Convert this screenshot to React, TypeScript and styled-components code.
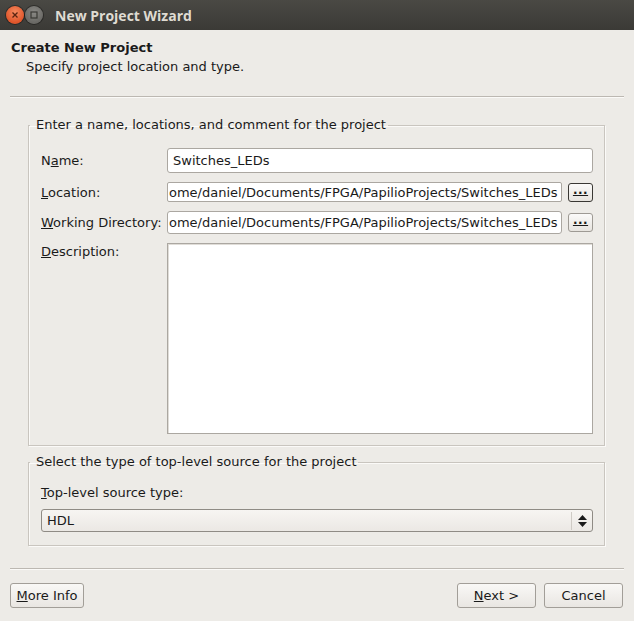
import React from "react"
import styled, { createGlobalStyle } from "styled-components"

const GlobalStyle = createGlobalStyle`
  html, body {
    margin: 0;
    padding: 0;
    background: #edebe7;
  }
  body {
    font-family: "DejaVu Sans", "Noto Sans", sans-serif;
    font-size: 13px;
    color: #1a1a1a;
  }
`

const Window = styled.div`
  width: 634px;
  height: 621px;
  display: flex;
  flex-direction: column;
  background: #edebe7;
  overflow: hidden;
`

const TitleBar = styled.div`
  height: 30px;
  flex: none;
  display: flex;
  align-items: center;
  padding-left: 6px;
  gap: 1px;
  background: linear-gradient(#4a4944, #3b3a36);
`

const WinButton = styled.div<{ $kind: "close" | "min" }>`
  width: 18px;
  height: 18px;
  border-radius: 50%;
  display: flex;
  align-items: center;
  justify-content: center;
  background: ${(p) =>
    p.$kind === "close"
      ? "radial-gradient(circle at 50% 35%, #f58a5f, #e0552a 70%)"
      : "radial-gradient(circle at 50% 35%, #8a8985, #6a6965 70%)"};
  box-shadow: 0 0 0 1px rgba(0, 0, 0, 0.35);
`

const WinTitle = styled.div`
  margin-left: 11px;
  color: #dfdbd2;
  font-family: "Open Sans", "DejaVu Sans", sans-serif;
  font-weight: 700;
  font-size: 14px;
`

const Header = styled.div`
  padding: 10px 11px 0;
  height: 56px;
  flex: none;
`

const HeaderTitle = styled.div`
  font-weight: 700;
  line-height: 16px;
`

const HeaderSub = styled.div`
  padding-left: 15px;
  margin-top: 3px;
  line-height: 16px;
`

const Separator = styled.div`
  height: 1px;
  background: #bcb8b2;
  border-bottom: 1px solid #fbfaf8;
  margin: 0 10px;
  flex: none;
`

const Body = styled.div`
  padding: 20px 29px 0 28px;
  display: flex;
  flex-direction: column;
  gap: 9px;
  flex: none;
`

const Group = styled.fieldset<{ $height: number }>`
  margin: 0;
  padding: 0 11px 0 12px;
  height: ${(p) => p.$height}px;
  box-sizing: border-box;
  border: 1px solid #c9c5bf;
  box-shadow: 1px 1px 0 #fbfaf8, inset 1px 1px 0 #fbfaf8;
  min-width: 0;
`

const Legend = styled.legend`
  padding: 0 2px 0 6px;
  margin-left: -11px;
  line-height: 14px;
`

const FormGrid = styled.div`
  display: grid;
  grid-template-columns: 126px 1fr;
  grid-template-rows: 25px 20px 23px 191px;
  row-gap: 9px;
  margin-top: 16px;
`

const Label = styled.div<{ $top?: boolean }>`
  display: flex;
  align-items: ${(p) => (p.$top ? "flex-start" : "center")};
  padding-top: ${(p) => (p.$top ? "1px" : "0")};
  white-space: nowrap;
`

const FieldRow = styled.div`
  display: flex;
  align-items: center;
  gap: 6px;
  min-width: 0;
`

const Field = styled.div<{ $height: number; $radius?: number }>`
  flex: 1;
  min-width: 0;
  height: ${(p) => p.$height}px;
  box-sizing: border-box;
  background: #fff;
  border: 1px solid #aba7a1;
  border-radius: ${(p) => p.$radius ?? 3}px;
  padding: 0 5px;
  display: flex;
  align-items: center;
  white-space: nowrap;
  overflow: hidden;
  color: #1a1a1a;
`

const ScrolledText = styled.span`
  margin-left: -4px;
`

const TextArea = styled.div`
  background: #fff;
  border: 1px solid #aba7a1;
  box-shadow: inset 1px 1px 0 #e0ddd8;
`

const BrowseButton = styled.div<{ $focus?: boolean }>`
  width: 25px;
  height: 19px;
  flex: none;
  box-sizing: border-box;
  border: 1px solid ${(p) => (p.$focus ? "#3a3834" : "#9e9a94")};
  border-radius: 3px;
  background: linear-gradient(#fbfaf9, #e7e4df);
  display: flex;
  align-items: center;
  justify-content: center;
  font-weight: 700;
  font-size: 12px;
  padding-bottom: 5px;
  letter-spacing: 0.5px;
`

const TypeLabel = styled.div`
  margin-top: 16px;
  line-height: 15px;
`

const Combo = styled.div`
  margin-top: 9px;
  height: 23px;
  box-sizing: border-box;
  border: 1px solid #8f8b85;
  border-radius: 3px;
  background: linear-gradient(#f7f5f2, #ebe8e4);
  display: flex;
  align-items: center;
  padding-left: 5px;
`

const ComboText = styled.div`
  flex: 1;
`

const ComboArrows = styled.div`
  width: 20px;
  height: 18px;
  border-left: 1px solid #cfcbc5;
  display: flex;
  align-items: center;
  justify-content: center;
`

const Footer = styled.div`
  margin-top: auto;
  padding-bottom: 13px;
  display: flex;
  flex-direction: column;
`

const ButtonRow = styled.div`
  display: flex;
  gap: 8px;
  padding: 13px 11px 0 10px;
`

const Button = styled.div<{ $width: number }>`
  width: ${(p) => p.$width}px;
  height: 25px;
  box-sizing: border-box;
  border: 1px solid #a29e98;
  border-radius: 3px;
  background: linear-gradient(#f9f8f6, #e9e6e2);
  display: flex;
  align-items: center;
  justify-content: center;
`

const Spacer = styled.div`
  flex: 1;
`

const ArrowsIcon = () => (
  <svg width="9" height="12" viewBox="0 0 9 12">
    <path d="M4.5 0 L9 5 H0 Z" fill="#1a1a1a" />
    <path d="M4.5 12 L9 7 H0 Z" fill="#1a1a1a" />
  </svg>
)

export default function App() {
  return (
    <>
      <GlobalStyle />
      <Window>
        <TitleBar>
          <WinButton $kind="close">
            <svg width="8" height="8" viewBox="0 0 8 8">
              <path d="M1.5 1.5 L6.5 6.5 M6.5 1.5 L1.5 6.5" stroke="#5a2410" strokeWidth="1.3" />
            </svg>
          </WinButton>
          <WinButton $kind="min">
            <svg width="8" height="8" viewBox="0 0 8 8">
              <rect x="1" y="1" width="6" height="6" fill="none" stroke="#3a3935" strokeWidth="1.2" />
            </svg>
          </WinButton>
          <WinTitle>New Project Wizard</WinTitle>
        </TitleBar>

        <Header>
          <HeaderTitle>Create New Project</HeaderTitle>
          <HeaderSub>Specify project location and type.</HeaderSub>
        </Header>
        <Separator />

        <Body>
          <Group $height={328}>
            <Legend>Enter a name, locations, and comment for the project</Legend>
            <FormGrid>
              <Label>
                <span>
                  N<u>a</u>me:
                </span>
              </Label>
              <Field $height={25}>Switches_LEDs</Field>

              <Label>
                <span>
                  <u>L</u>ocation:
                </span>
              </Label>
              <FieldRow>
                <Field $height={20} $radius={2}>
                  <ScrolledText>ome/daniel/Documents/FPGA/PapilioProjects/Switches_LEDs</ScrolledText>
                </Field>
                <BrowseButton $focus>
                  <u>...</u>
                </BrowseButton>
              </FieldRow>

              <Label>
                <span>
                  <u>W</u>orking Directory:
                </span>
              </Label>
              <FieldRow>
                <Field $height={23}>
                  <ScrolledText>ome/daniel/Documents/FPGA/PapilioProjects/Switches_LEDs</ScrolledText>
                </Field>
                <BrowseButton>
                  <u>...</u>
                </BrowseButton>
              </FieldRow>

              <Label $top>
                <span>
                  <u>D</u>escription:
                </span>
              </Label>
              <TextArea />
            </FormGrid>
          </Group>

          <Group $height={91}>
            <Legend>Select the type of top-level source for the project</Legend>
            <TypeLabel>
              <u>T</u>op-level source type:
            </TypeLabel>
            <Combo>
              <ComboText>HDL</ComboText>
              <ComboArrows>
                <ArrowsIcon />
              </ComboArrows>
            </Combo>
          </Group>
        </Body>

        <Footer>
          <Separator />
          <ButtonRow>
            <Button $width={74}>
              <span>
                <u>M</u>ore Info
              </span>
            </Button>
            <Spacer />
            <Button $width={79}>
              <span>
                <u>N</u>ext &gt;
              </span>
            </Button>
            <Button $width={79}>Cancel</Button>
          </ButtonRow>
        </Footer>
      </Window>
    </>
  )
}
